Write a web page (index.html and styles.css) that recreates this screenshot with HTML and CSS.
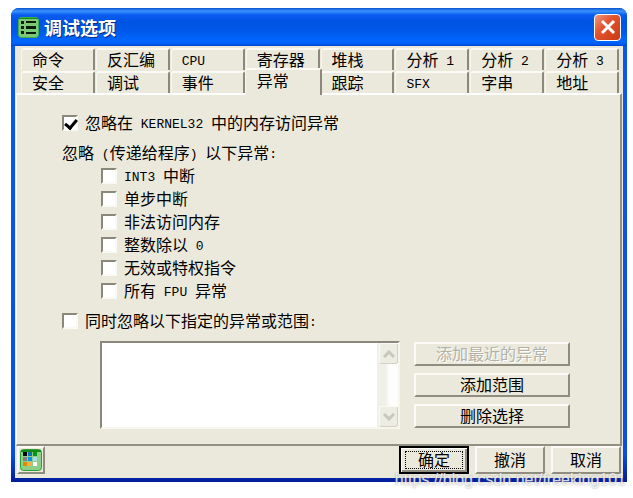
FILE: index.html
```html
<!DOCTYPE html>
<html lang="zh-CN">
<head>
    <meta charset="UTF-8">
    <meta name="viewport" content="width=device-width, initial-scale=1.0">
    <title>调试选项</title>
    <link rel="stylesheet" href="styles.css">
</head>
<body>
    <div class="window">
        <div class="titlebar">
            <svg class="title-icon" width="21" height="21" viewBox="0 0 21 21">
                <rect x="0.5" y="0.5" width="20" height="20" rx="3" fill="#7cc878" stroke="#3fae46"/>
                <rect x="1" y="1" width="19" height="1" fill="#188a1c"/>
                <path d="M3 4h3v3H3zM8 4h10v2H8zM3 9h3v3H3zM8 9h10v3H8zM3 14h3v3H3zM8 15h10v2H8z" fill="#061c06"/>
            </svg>
            <h1 class="title">调试选项</h1>
            <button class="close" aria-label="关闭">
                <svg width="16" height="16" viewBox="0 0 16 16">
                    <path d="M2 2l12 12M14 2L2 14" stroke="#fff" stroke-width="3"/>
                </svg>
            </button>
        </div>

        <div class="client">
            <div class="tabs" role="tablist">
                <button class="tab">命令</button>
                <button class="tab">反汇编</button>
                <button class="tab"><span class="en">CPU</span></button>
                <button class="tab">寄存器</button>
                <button class="tab">堆栈</button>
                <button class="tab">分析<span class="en"> 1</span></button>
                <button class="tab">分析<span class="en"> 2</span></button>
                <button class="tab">分析<span class="en"> 3</span></button>
                <button class="tab">安全</button>
                <button class="tab">调试</button>
                <button class="tab">事件</button>
                <button class="tab active">异常</button>
                <button class="tab">跟踪</button>
                <button class="tab"><span class="en">SFX</span></button>
                <button class="tab">字串</button>
                <button class="tab">地址</button>
            </div>

            <div class="panel">
                <label class="check"><input type="checkbox" checked><span>忽略在<span class="en"> KERNEL32 </span>中的内存访问异常</span></label>
                <p class="caption">忽略<span class="en"> (</span>传递给程序<span class="en">) </span>以下异常<span class="en">:</span></p>
                <div class="check-list">
                    <label class="check"><input type="checkbox"><span><span class="en">INT3 </span>中断</span></label>
                    <label class="check"><input type="checkbox"><span>单步中断</span></label>
                    <label class="check"><input type="checkbox"><span>非法访问内存</span></label>
                    <label class="check"><input type="checkbox"><span>整数除以<span class="en"> 0</span></span></label>
                    <label class="check"><input type="checkbox"><span>无效或特权指令</span></label>
                    <label class="check"><input type="checkbox"><span>所有<span class="en"> FPU </span>异常</span></label>
                </div>
                <label class="check"><input type="checkbox"><span>同时忽略以下指定的异常或范围<span class="en">:</span></span></label>

                <div class="ranges">
                    <div class="listbox">
                        <select class="list" multiple aria-label="异常或范围"></select>
                        <div class="scrollbar">
                            <button class="arrow" aria-label="向上" disabled>
                                <svg width="12" height="8" viewBox="0 0 12 8"><path d="M1 7l5-5 5 5" fill="none" stroke="#c9c8bb" stroke-width="3"/></svg>
                            </button>
                            <button class="arrow" aria-label="向下" disabled>
                                <svg width="12" height="8" viewBox="0 0 12 8"><path d="M1 1l5 5 5-5" fill="none" stroke="#c9c8bb" stroke-width="3"/></svg>
                            </button>
                        </div>
                    </div>
                    <div class="range-buttons">
                        <button class="btn" disabled>添加最近的异常</button>
                        <button class="btn">添加范围</button>
                        <button class="btn">删除选择</button>
                    </div>
                </div>
            </div>

            <div class="footer">
                <button class="btn color-btn" aria-label="颜色">
                    <svg width="22" height="22" viewBox="0 0 22 22">
                        <rect x="0.5" y="0.5" width="21" height="21" rx="3" fill="#8ccf88" stroke="#2ca034"/>
                        <rect x="1" y="1" width="20" height="2" fill="#118a18"/>
                        <rect x="3" y="3" width="4" height="4" fill="#000"/>
                        <rect x="8" y="3" width="4" height="4" fill="#0b72a8"/>
                        <rect x="13" y="3" width="4" height="4" fill="#0c9410"/>
                        <rect x="3" y="8" width="4" height="4" fill="#808080"/>
                        <rect x="8" y="8" width="4" height="4" fill="#0a94e0"/>
                        <rect x="13" y="8" width="4" height="4" fill="#a5dcf4"/>
                        <rect x="3" y="13" width="4" height="4" fill="#e08a00"/>
                        <rect x="8" y="13" width="4" height="4" fill="#f5ac50"/>
                        <rect x="13" y="13" width="4" height="4" fill="#fff"/>
                    </svg>
                </button>
                <button class="btn default"><span class="focus">确定</span></button>
                <button class="btn">撤消</button>
                <button class="btn">取消</button>
            </div>
        </div>
        <div class="watermark">https://blog.csdn.net/freeking101</div>
    </div>
</body>
</html>
```
FILE: styles.css
```css
* {
    box-sizing: border-box;
}

body {
    margin: 0;
    padding: 8px 6px 16px 11px;
    background: #fff;
    color: #000;
    font-family: "Noto Sans CJK SC", sans-serif;
    font-size: 16px;
    line-height: 20px;
}

button {
    font: inherit;
    color: inherit;
    padding: 0;
}

/* half-width characters */
.en {
    font-family: "Liberation Mono", monospace;
    font-size: 13px;
    line-height: 1;
    vertical-align: 1px;
    white-space: pre;
}

.window {
    position: relative;
    background: linear-gradient(#0a5bea, #0a4fe0 94%, #001c9c);
    border-radius: 8px 8px 0 0;
    padding: 0 4px 4px;
}

.titlebar {
    display: flex;
    align-items: center;
    height: 38px;
    margin: 0 -4px;
    padding: 0 6px 0 7px;
    border-radius: 8px 8px 0 0;
    background: linear-gradient(#0a50d0, #3a94fc 8%, #0a5cf0 18%, #0054e3 35%, #0058e8 60%, #0066ff 85%, #0060f8 94%, #0042c8);
}

.title {
    flex: 1;
    margin: 0 0 0 5px;
    color: #fff;
    font-size: 18px;
    line-height: 24px;
    text-shadow: 1px 1px 0 #0a2a80;
}

.close {
    display: flex;
    align-items: center;
    justify-content: center;
    width: 27px;
    height: 27px;
    border: 1px solid #fff;
    border-radius: 4px;
    background: linear-gradient(135deg, #f09a80, #e35430 40%, #c83a10);
}

.client {
    padding: 2px 1px 4px;
    background: #ebe9dc;
}

.tabs {
    display: grid;
    grid-template-columns: repeat(8, 1fr);
    row-gap: 1px;
    padding: 0 3px 0 4px;
}

.tab {
    height: 22px;
    margin-left: 1px;
    padding: 0 0 2px 10px;
    border: solid;
    border-width: 2px 2px 0 1px;
    border-color: #fbfaf5 #8c897c #fff #f7f6ef;
    border-radius: 3px 2px 0 0;
    background: #ebe9dc;
    text-align: left;
    line-height: 18px;
    white-space: nowrap;
}

.tab.active {
    z-index: 1;
    height: 27px;
    margin: -3px -2px -2px 0;
    padding: 0 0 6px 11px;
}

.panel {
    padding: 16px 50px 15px 45px;
    border: solid;
    border-width: 2px 2px 2px 1px;
    border-color: #fff #929082 #929082 #fff;
}

.check {
    display: flex;
    align-items: center;
    gap: 7px;
    height: 23px;
}

.check > span {
    padding-bottom: 2px;
}

.check input {
    appearance: none;
    width: 16px;
    height: 16px;
    margin: 0;
    border: 2px solid;
    border-color: #8a887a #faf9f3 #faf9f3 #8a887a;
    background: #fff;
}

.check input:checked::before {
    content: "";
    display: block;
    width: 5px;
    height: 9px;
    margin-left: 3px;
    border: solid #000;
    border-width: 0 3px 3px 0;
    transform: rotate(40deg);
}

.caption {
    margin: 8px 0 2px;
}

.check-list {
    margin: 0 0 7px 39px;
}

.ranges {
    display: flex;
    gap: 14px;
    margin: 9px 0 0 38px;
}

.listbox {
    display: flex;
    flex: 1;
    border: 2px solid;
    border-color: #8a887a #f7f6ee #f7f6ee #8a887a;
    background: #fff;
}

.list {
    flex: 1;
    min-width: 0;
    height: 84px;
    border: 0;
    background: #fff;
}

.scrollbar {
    display: flex;
    flex-direction: column;
    justify-content: space-between;
    width: 21px;
    background: linear-gradient(90deg, #f1f0e8 40%, #fdfdfb 60%);
}

.arrow {
    display: flex;
    align-items: center;
    justify-content: center;
    width: 19px;
    height: 21px;
    margin-left: 2px;
    border: 1px solid #fafaf5;
    border-bottom-color: #d2d0c2;
    border-right-color: #d2d0c2;
    border-radius: 3px;
    background: #eeede3;
}

.range-buttons {
    display: flex;
    flex-direction: column;
    gap: 7px;
    width: 156px;
    padding: 1px 0 0;
}

.btn {
    height: 24px;
    padding-bottom: 2px;
    border: 2px solid;
    border-color: #fbfaf6 #8f8d7f #8f8d7f #fbfaf6;
    background: #ebe9dc;
    line-height: 18px;
}

.btn:disabled {
    color: #b3b1a4;
    text-shadow: 1px 1px 0 #fff;
}

.footer {
    display: flex;
    gap: 6px;
    padding: 0 1px;
}

.footer .btn {
    width: 70px;
    height: 28px;
}

.footer .color-btn {
    display: flex;
    align-items: center;
    justify-content: center;
    width: 28px;
    margin-right: auto;
    padding: 0;
}

.footer .default {
    padding: 1px;
    border-color: #000;
    box-shadow: inset 1px 1px 0 #fff, inset -2px -2px 0 #8f8d7f;
}

.focus {
    display: block;
    height: 18px;
    margin: 0 3px;
    border: 1px dotted #000;
    line-height: 14px;
}

.watermark {
    position: absolute;
    right: 1px;
    bottom: -8px;
    color: rgba(255, 255, 255, 0.8);
    font-family: "Liberation Sans", sans-serif;
    text-shadow: 0 0 2px rgba(120, 120, 120, 0.8);
}
```
